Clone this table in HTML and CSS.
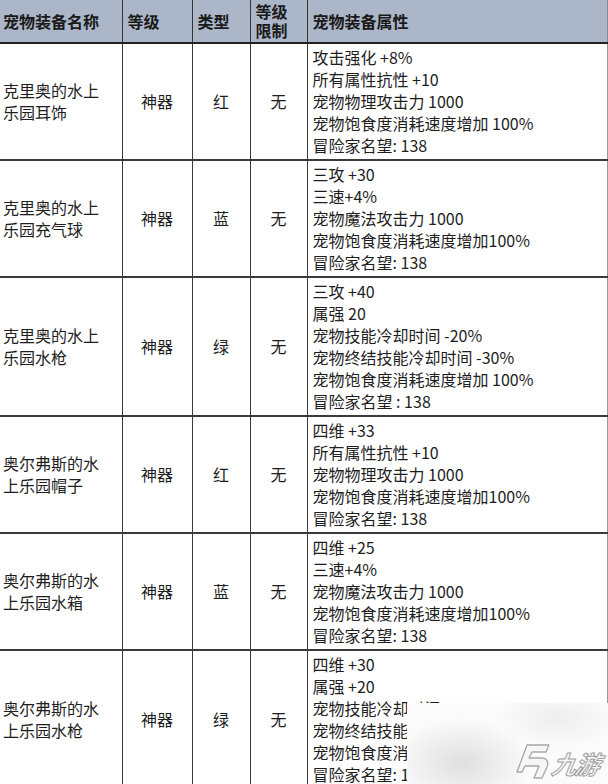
FILE: index.html
```html
<!DOCTYPE html>
<html lang="zh">
<head>
<meta charset="utf-8">
<link rel="stylesheet" href="styles.css">
</head>
<body>
<div class="page">
<table class="equip">
  <colgroup>
    <col class="c-name"><col class="c-grade"><col class="c-type"><col class="c-limit"><col class="c-attr">
  </colgroup>
  <thead>
    <tr>
      <th>宠物装备名称</th>
      <th>等级</th>
      <th>类型</th>
      <th>等级限制</th>
      <th>宠物装备属性</th>
    </tr>
  </thead>
  <tbody>
    <tr>
      <td class="name">克里奥的水上<br>乐园耳饰</td>
      <td class="mid">神器</td>
      <td class="mid">红</td>
      <td class="mid">无</td>
      <td class="attr">攻击强化 +8%<br>所有属性抗性 +10<br>宠物物理攻击力 1000<br>宠物饱食度消耗速度增加 100%<br>冒险家名望: 138</td>
    </tr>
    <tr>
      <td class="name">克里奥的水上<br>乐园充气球</td>
      <td class="mid">神器</td>
      <td class="mid">蓝</td>
      <td class="mid">无</td>
      <td class="attr">三攻 +30<br>三速+4%<br>宠物魔法攻击力 1000<br>宠物饱食度消耗速度增加100%<br>冒险家名望: 138</td>
    </tr>
    <tr>
      <td class="name">克里奥的水上<br>乐园水枪</td>
      <td class="mid">神器</td>
      <td class="mid">绿</td>
      <td class="mid">无</td>
      <td class="attr">三攻 +40<br>属强 20<br>宠物技能冷却时间 -20%<br>宠物终结技能冷却时间 -30%<br>宠物饱食度消耗速度增加 100%<br>冒险家名望 : 138</td>
    </tr>
    <tr>
      <td class="name">奥尔弗斯的水<br>上乐园帽子</td>
      <td class="mid">神器</td>
      <td class="mid">红</td>
      <td class="mid">无</td>
      <td class="attr">四维 +33<br>所有属性抗性 +10<br>宠物物理攻击力 1000<br>宠物饱食度消耗速度增加100%<br>冒险家名望: 138</td>
    </tr>
    <tr>
      <td class="name">奥尔弗斯的水<br>上乐园水箱</td>
      <td class="mid">神器</td>
      <td class="mid">蓝</td>
      <td class="mid">无</td>
      <td class="attr">四维 +25<br>三速+4%<br>宠物魔法攻击力 1000<br>宠物饱食度消耗速度增加100%<br>冒险家名望: 138</td>
    </tr>
    <tr>
      <td class="name">奥尔弗斯的水<br>上乐园水枪</td>
      <td class="mid">神器</td>
      <td class="mid">绿</td>
      <td class="mid">无</td>
      <td class="attr">四维 +30<br>属强 +20<br>宠物技能冷却时间 -20%<br>宠物终结技能冷却时间 -30%<br>宠物饱食度消耗速度增加 100%<br>冒险家名望: 138</td>
    </tr>
  </tbody>
</table>
<div class="watermark">
  <svg class="wm-logo" width="36" height="38" viewBox="0 0 36 38">
    <path d="M12 3 L34 3 L31 10 L17 10 L14 16 L26 16 C32 16 34 20 32 25 L27 36 L19 36 L24 24 L10 24 L7 30 L2 30 Z" fill="#f6f6f6" stroke="#a8a8a8" stroke-width="1.3" stroke-linejoin="round"/>
  </svg>
  <span class="wm-text">九游</span>
</div>
</div>
</body>
</html>
```
FILE: styles.css
```css
html, body {
  margin: 0;
  padding: 0;
  background: #ffffff;
}
.page {
  position: relative;
  width: 608px;
  height: 784px;
  overflow: hidden;
}
.equip {
  border-collapse: collapse;
  table-layout: fixed;
  width: 607px;
  font-family: "Noto Sans CJK SC", "Microsoft YaHei", sans-serif;
  font-size: 16px;
  color: #1e1e1e;
}
.c-name { width: 122px; }
.c-grade { width: 70px; }
.c-type { width: 58px; }
.c-limit { width: 57px; }
.c-attr { width: 300px; }
.equip th {
  background: #abb6c8;
  font-weight: bold;
  text-align: left;
  line-height: 19px;
  height: 42px;
  padding: 0 5px;
  vertical-align: middle;
  border-right: 1.5px solid #333;
  border-bottom: 2px solid #222;
  color: #1a1a1a;
}
.equip th:first-child { padding-left: 3px; }
.equip th:last-child { border-right: 1.5px solid #8a8a8a; }
.equip td {
  border-right: 1.5px solid #3a3a3a;
  border-bottom: 2px solid #3a3a3a;
  line-height: 22px;
  padding: 2px 5px 3px;
  vertical-align: middle;
  font-weight: 400;
}
.equip td:last-child { border-right: 1.5px solid #999; }
.equip td.name {
  padding-left: 3px;
  padding-right: 0;
  white-space: nowrap;
}
.equip td.mid { text-align: center; }
.equip td.attr {
  vertical-align: top;
  white-space: nowrap;
  padding-left: 5px;
}
.watermark {
  position: absolute;
  left: 407px;
  top: 703px;
  width: 201px;
  height: 81px;
  background:
    radial-gradient(ellipse 70px 45px at 55px 60px, rgba(200,200,200,0.55), rgba(255,255,255,0) 100%),
    radial-gradient(ellipse 60px 30px at 150px 15px, rgba(225,225,225,0.5), rgba(255,255,255,0) 100%),
    #fbfbfb;
  display: flex;
  align-items: flex-end;
  padding-left: 108px;
  padding-bottom: 4px;
  box-sizing: border-box;
  gap: 1px;
  white-space: nowrap;
}
.wm-logo { flex: none; }
.wm-text {
  font-family: "Noto Sans CJK SC", sans-serif;
  font-size: 25px;
  font-style: italic;
  font-weight: bold;
  color: #f6f6f6;
  -webkit-text-stroke: 1px #a0a0a0;
  transform: skewX(-10deg);
  letter-spacing: -2px;
  line-height: 1;
  white-space: nowrap;
  padding-bottom: 4px;
}
```
